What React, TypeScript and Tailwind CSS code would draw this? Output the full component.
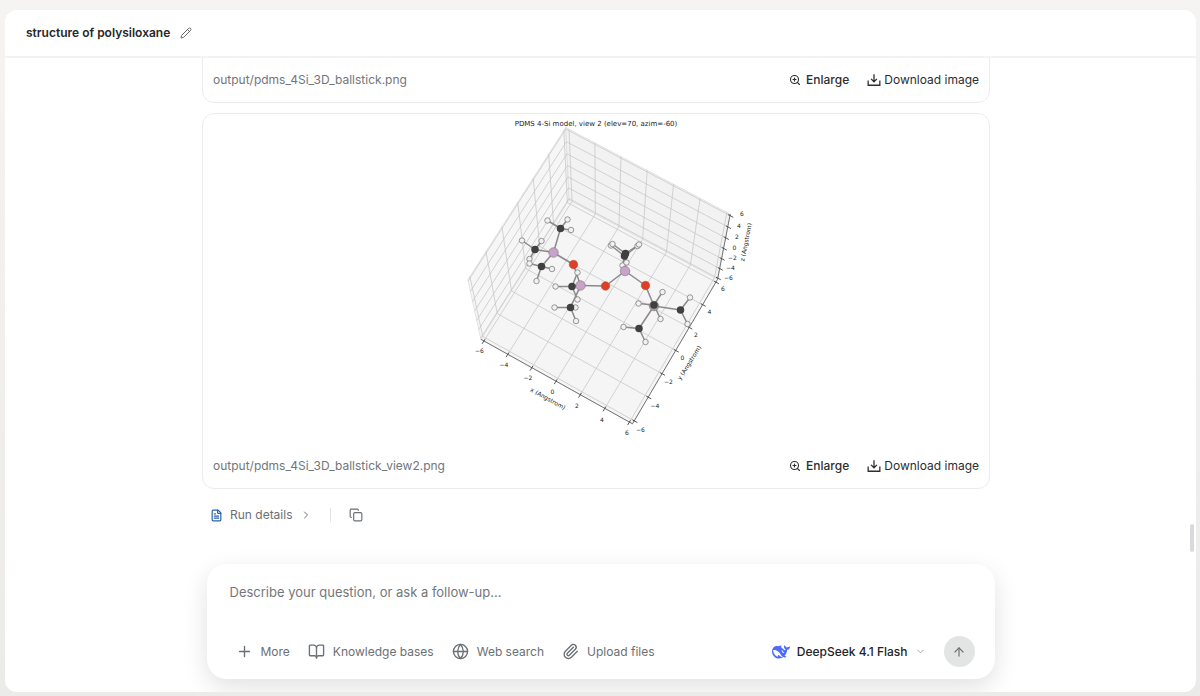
import React, { useState } from 'react'
import { ArrowUp, BookOpen, ChevronDown, ChevronRight, Copy, FileText, Globe, Paperclip, Pencil, Plus, ZoomIn } from 'lucide-react'

type Vec3 = [number, number, number]
type Point = [number, number]

const TICKS = [-6, -4, -2, 0, 2, 4, 6]
const EDGE = 6.25

// camera for elev=70, azim=-60
const project = ([x, y, z]: Vec3): Point => {
    const elev = (70 * Math.PI) / 180
    const azim = (-60 * Math.PI) / 180
    const [px, py, pz] = [x * 0.088, y * 0.088, z * 0.088]
    const depth = 10 - (Math.cos(elev) * (Math.cos(azim) * px + Math.sin(azim) * py) + Math.sin(elev) * pz)
    const right = -Math.sin(azim) * px + Math.cos(azim) * py
    const up = -Math.sin(elev) * (Math.cos(azim) * px + Math.sin(azim) * py) + Math.cos(elev) * pz
    return [338 + (right / depth) * 3312, 331 - (up / depth) * 3312]
}

const toPoints = (list: Vec3[]) => list.map((p) => project(p).map((n) => n.toFixed(1)).join(',')).join(' ')

const PANES: Vec3[][] = [
    [[-EDGE, -EDGE, -EDGE], [-EDGE, EDGE, -EDGE], [-EDGE, EDGE, EDGE], [-EDGE, -EDGE, EDGE]],
    [[-EDGE, EDGE, -EDGE], [EDGE, EDGE, -EDGE], [EDGE, EDGE, EDGE], [-EDGE, EDGE, EDGE]],
    [[-EDGE, -EDGE, -EDGE], [EDGE, -EDGE, -EDGE], [EDGE, EDGE, -EDGE], [-EDGE, EDGE, -EDGE]],
]
const PANE_COLORS = ['#f6f6f6', '#f2f2f2', '#f5f5f5']

const X_LABELS: Point[] = [[97, 474], [146, 501], [194, 528], [243, 555], [292, 583], [342, 611], [392, 638]]
const Y_LABELS: Point[] = [[419, 631], [448, 583], [475, 536], [503, 488], [530, 442], [557, 396], [584, 350]]
const Z_LABELS: Point[] = [[595, 328], [599, 308], [603, 288], [607, 267], [612, 246], [616, 223], [622, 200]]

const SI: Point[] = [[245, 277], [299, 343], [388, 314], [446, 384]]
const SI_COLORS = ['#c8a2c8', '#c8a2c8', '#c8a2c8', '#a39aa3']
const O: Point[] = [[285, 301], [349, 344], [429, 343]]

// each methyl group: silicon it hangs on, carbon, hydrogens
const METHYLS: { si: number; c: Point; h: Point[] }[] = [
    { si: 0, c: [259, 229], h: [[233, 213], [273, 211], [280, 232]] },
    { si: 0, c: [208, 271], h: [[182, 253], [221, 254], [197, 290]] },
    { si: 0, c: [221, 305], h: [[242, 310], [211, 334], [197, 299]] },
    { si: 1, c: [282, 345], h: [[249, 345], [293, 317], [293, 371]] },
    { si: 1, c: [279, 387], h: [[247, 387], [289, 387], [290, 414]] },
    { si: 2, c: [387, 284], h: [[360, 263], [413, 264], [383, 303]] },
    { si: 2, c: [389, 279], h: [[363, 260], [416, 261], [391, 297]] },
    { si: 3, c: [446, 382], h: [[463, 356], [415, 379], [459, 410]] },
    { si: 3, c: [499, 392], h: [[518, 367], [513, 420]] },
    { si: 3, c: [416, 429], h: [[385, 426], [429, 456]] },
]

const Bond = ({ a, b }: { a: Point; b: Point }) => (
    <line x1={a[0]} y1={a[1]} x2={b[0]} y2={b[1]} stroke="#8a8a8a" strokeWidth="3" />
)

const Tick = ({ a, b }: { a: Vec3; b: Vec3 }) => (
    <polyline points={toPoints([a, b])} stroke="#444" strokeWidth="1.8" fill="none" />
)

const MoleculePlot = () => (
    <svg viewBox="0 0 660 660" className="block w-full max-w-[330px]" role="img" aria-label="PDMS 4-Si model">
        {PANES.map((pane, i) => (
            <polygon key={i} points={toPoints(pane)} fill={PANE_COLORS[i]} stroke="#dcdcdc" strokeWidth="1.5" />
        ))}
        <g fill="none" stroke="#c6c6c6" strokeWidth="1.5">
            {TICKS.map((t) => (
                <g key={t}>
                    <polyline points={toPoints([[t, -EDGE, -EDGE], [t, EDGE, -EDGE], [t, EDGE, EDGE]])} />
                    <polyline points={toPoints([[EDGE, t, -EDGE], [-EDGE, t, -EDGE], [-EDGE, t, EDGE]])} />
                    <polyline points={toPoints([[-EDGE, -EDGE, t], [-EDGE, EDGE, t], [EDGE, EDGE, t]])} />
                </g>
            ))}
        </g>
        <polyline
            points={toPoints([[-EDGE, -EDGE, -EDGE], [EDGE, -EDGE, -EDGE], [EDGE, EDGE, -EDGE], [EDGE, EDGE, EDGE]])}
            fill="none"
            stroke="#666"
            strokeWidth="1.8"
        />
        {TICKS.map((t) => (
            <g key={t}>
                <Tick a={[t, -6.1, -EDGE]} b={[t, -6.5, -EDGE]} />
                <Tick a={[6.1, t, -EDGE]} b={[6.5, t, -EDGE]} />
                <Tick a={[6.1, EDGE, t]} b={[6.5, EDGE, t]} />
            </g>
        ))}

        {/* siloxane backbone */}
        {O.map((o, i) => (
            <g key={i}>
                <Bond a={SI[i]} b={o} />
                <Bond a={o} b={SI[i + 1]} />
            </g>
        ))}
        {METHYLS.map((m, i) => (
            <g key={i}>
                <Bond a={SI[m.si]} b={m.c} />
                {m.h.map((h, j) => <Bond key={j} a={m.c} b={h} />)}
            </g>
        ))}
        {METHYLS.flatMap((m) => m.h).map(([x, y], i) => (
            <circle key={i} cx={x} cy={y} r="5.5" fill="#f1f1f1" stroke="#7d7d7d" strokeWidth="1.6" />
        ))}
        {SI.map(([x, y], i) => (
            <circle key={i} cx={x} cy={y} r="9.5" fill={SI_COLORS[i]} stroke="#8b7a8b" strokeWidth="1.4" />
        ))}
        {O.map(([x, y], i) => (
            <circle key={i} cx={x} cy={y} r="8.5" fill="#dd4026" stroke="#b5452f" strokeWidth="1" />
        ))}
        {METHYLS.map(({ c }, i) => (
            <circle key={i} cx={c[0]} cy={c[1]} r="7.5" fill="#404040" />
        ))}

        <g fontFamily="DejaVu Sans, sans-serif" fontSize="12" fill="#222" textAnchor="middle">
            <text x="330" y="23" fontSize="14">PDMS 4-Si model, view 2 (elev=70, azim=-60)</text>
            {[X_LABELS, Y_LABELS, Z_LABELS].map((labels, axis) =>
                labels.map(([x, y], i) => (
                    <text key={`${axis}-${i}`} x={x} y={y + 4}>{String(TICKS[i]).replace('-', '−')}</text>
                ))
            )}
            <text transform="translate(232 573) rotate(29)">x (Angstrom)</text>
            <text transform="translate(520 500) rotate(-58)">y (Angstrom)</text>
            <text transform="translate(634 257) rotate(-79)">z (Angstrom)</text>
        </g>
    </svg>
)

const DownloadIcon = () => (
    <svg viewBox="0 0 24 24" className="size-[14px]" fill="none" stroke="currentColor" strokeWidth="2.2" aria-hidden="true">
        <path d="M12 2v13M7 10l5 5 5-5M2 13v8h20v-8" />
    </svg>
)

const DeepSeekLogo = () => (
    <svg viewBox="0 0 24 24" className="size-[18px] text-[#4d6bfe]" fill="currentColor" aria-hidden="true">
        <path d="M23.748 4.482c-.254-.124-.364.113-.512.234-.051.039-.094.09-.137.136-.372.397-.806.657-1.373.626-.829-.046-1.537.214-2.163.848-.133-.782-.575-1.248-1.247-1.548-.352-.156-.708-.311-.955-.65-.172-.241-.219-.51-.305-.774-.055-.16-.11-.323-.293-.35-.2-.031-.278.136-.356.276-.313.572-.434 1.202-.422 1.84.027 1.436.633 2.58 1.838 3.393.137.093.172.187.129.323-.082.28-.18.552-.266.833-.055.179-.137.217-.329.14a5.526 5.526 0 01-1.736-1.18c-.857-.828-1.631-1.742-2.597-2.458a11.365 11.365 0 00-.689-.471c-.985-.957.13-1.743.388-1.836.27-.098.093-.432-.779-.428-.872.004-1.67.295-2.687.684a3.055 3.055 0 01-.465.137 9.597 9.597 0 00-2.883-.102c-1.885.21-3.39 1.102-4.497 2.623C.082 8.606-.231 10.684.152 12.85c.403 2.284 1.569 4.175 3.36 5.653 1.858 1.533 3.997 2.284 6.438 2.14 1.482-.085 3.133-.284 4.994-1.86.47.234.962.327 1.78.397.63.059 1.236-.03 1.705-.128.735-.156.684-.837.419-.961-2.155-1.004-1.682-.595-2.113-.926 1.096-1.296 2.746-2.642 3.392-7.003.05-.347.007-.565 0-.845-.004-.17.035-.237.23-.256a4.173 4.173 0 001.545-.475c1.396-.763 1.96-2.015 2.093-3.517.02-.23-.004-.467-.247-.588zM11.581 18c-2.089-1.642-3.102-2.183-3.52-2.16-.392.024-.321.471-.235.763.09.288.207.486.371.739.114.167.192.416-.113.603-.673.416-1.842-.14-1.897-.167-1.361-.802-2.5-1.86-3.301-3.307-.774-1.393-1.224-2.887-1.298-4.482-.02-.386.093-.522.477-.592a4.696 4.696 0 011.529-.039c2.132.312 3.946 1.265 5.468 2.774.868.86 1.525 1.887 2.202 2.891.72 1.066 1.494 2.082 2.48 2.914.348.292.625.514.891.677-.802.09-2.14.11-3.054-.614zm1-6.44a.306.306 0 01.415-.287.302.302 0 01.2.288.306.306 0 01-.31.307.303.303 0 01-.304-.308zm3.11 1.596c-.2.081-.399.151-.59.16a1.245 1.245 0 01-.798-.254c-.274-.23-.47-.358-.552-.758a1.73 1.73 0 01.016-.588c.07-.327-.008-.537-.239-.727-.187-.156-.426-.199-.688-.199a.559.559 0 01-.254-.078c-.11-.054-.2-.19-.114-.358.028-.054.16-.186.192-.21.356-.202.767-.136 1.146.016.352.144.618.408 1.001.782.391.451.462.576.685.914.176.265.336.537.445.848.067.195-.019.354-.25.452z" />
    </svg>
)

const ImageCard = ({ name, children }: { name: string; children?: React.ReactNode }) => (
    <article className="flex min-h-40 shrink-0 flex-col justify-end rounded-xl border border-[#ececec] bg-white">
        <div className="flex justify-center">{children}</div>
        <div className="flex h-11 items-center justify-between px-2.5 text-xs">
            <span className="text-[#71767b]">{name}</span>
            <div className="flex items-center gap-[18px] text-[#2c2e30]">
                <button type="button" className="flex items-center gap-[5px] font-medium">
                    <ZoomIn className="size-3" strokeWidth={2.2} />
                    Enlarge
                </button>
                <button type="button" className="flex items-center gap-[3px]">
                    <DownloadIcon />
                    Download image
                </button>
            </div>
        </div>
    </article>
)

const tools = [
    { label: 'More', icon: Plus },
    { label: 'Knowledge bases', icon: BookOpen },
    { label: 'Web search', icon: Globe },
    { label: 'Upload files', icon: Paperclip },
]

const Composer = () => {
    const [question, setQuestion] = useState('')

    return (
        <form
            className="relative z-10 mx-auto mb-[13px] w-[calc(100%-32px)] max-w-[788px] shrink-0 rounded-[20px] bg-white px-5 pt-4 pb-3 shadow-[0_8px_24px_rgba(0,0,0,0.12)]"
            onSubmit={(e) => e.preventDefault()}
        >
            <textarea
                aria-label="Question"
                value={question}
                onChange={(e) => setQuestion(e.target.value)}
                placeholder="Describe your question, or ask a follow-up…"
                className="block h-14 w-full resize-none px-[3px] text-[13px] leading-6 outline-none placeholder:text-[#73777b]"
            />
            <div className="flex items-center justify-between">
                <div className="flex items-center gap-[18px] pl-[9px] text-xs text-[#6b7075]">
                    {tools.map(({ label, icon: Icon }) => (
                        <button key={label} type="button" className="flex items-center gap-2">
                            <Icon className="size-[17px]" strokeWidth={1.9} />
                            {label}
                        </button>
                    ))}
                </div>
                <div className="flex items-center gap-[18px]">
                    <button type="button" className="flex items-center gap-[7px] text-xs font-medium text-[#222426]">
                        <DeepSeekLogo />
                        DeepSeek 4.1 Flash
                        <ChevronDown className="size-[11px] text-[#9a9da0]" />
                    </button>
                    <button type="submit" aria-label="Send" className="flex size-[31px] items-center justify-center rounded-full bg-[#e3e4e4] text-[#6c7073]">
                        <ArrowUp className="size-[14px]" />
                    </button>
                </div>
            </div>
        </form>
    )
}

const App = () => {
    return (
        <div className="flex h-screen flex-col bg-linear-to-b from-[#f6f4f3] to-[#ebebe9] pt-2.5 pr-1 pb-1 pl-[5px] font-[Inter,'Liberation_Sans',sans-serif]">
            <main className="flex min-h-0 flex-1 flex-col overflow-hidden rounded-xl bg-white">
                <header className="flex h-12 shrink-0 items-center gap-2.5 border-b-2 border-[#f3f3f3] px-[21px]">
                    <h1 className="text-xs font-semibold text-[#26282a]">structure of polysiloxane</h1>
                    <button type="button" aria-label="Rename">
                        <Pencil className="size-3 text-[#63676b]" />
                    </button>
                </header>

                <div className="flex min-h-0 flex-1">
                    <section className="flex min-w-0 flex-1 flex-col justify-end overflow-hidden px-4">
                        <div className="mx-auto flex w-full max-w-[788px] flex-col gap-2.5 pb-[33px]">
                            <ImageCard name="output/pdms_4Si_3D_ballstick.png" />
                            <ImageCard name="output/pdms_4Si_3D_ballstick_view2.png">
                                <MoleculePlot />
                            </ImageCard>
                            <div className="flex h-8 items-center px-2 text-xs text-[#6b7075]">
                                <button type="button" className="flex items-center gap-[7px]">
                                    <FileText className="size-[13px] text-[#2b62a8]" strokeWidth={2.2} />
                                    Run details
                                    <ChevronRight className="size-3" />
                                </button>
                                <span className="mx-[18px] h-3.5 w-px bg-[#e4e4e4]" />
                                <button type="button" aria-label="Copy">
                                    <Copy className="size-[14px]" />
                                </button>
                            </div>
                        </div>
                    </section>
                    {/* scroll thumb */}
                    <div className="flex w-[9px] flex-col items-center justify-end pb-3">
                        <div className="h-7 w-1 rounded-full bg-[#d8dadb]" />
                    </div>
                </div>

                <Composer />
            </main>
        </div>
    )
}

export default App
